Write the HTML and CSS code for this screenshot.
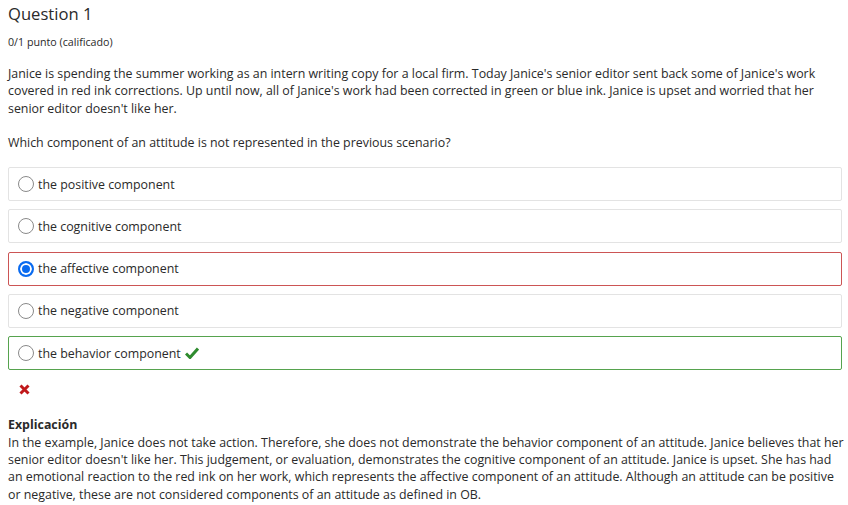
FILE: index.html
```html
<!DOCTYPE html>
<html lang="es">
<head>
  <meta charset="UTF-8" />
  <title>Question 1</title>
  <link rel="stylesheet" href="styles.css">
</head>
<body>
  <div class="question">
    <h2 class="q-title">Question 1</h2>
    <div class="q-points">0/1 punto (calificado)</div>

    <p class="q-text">Janice is spending the summer working as an intern writing copy for a local firm. Today Janice's senior editor sent back some of Janice's work covered in red ink corrections. Up until now, all of Janice's work had been corrected in green or blue ink. Janice is upset and worried that her senior editor doesn't like her.</p>
    <p class="q-prompt">Which component of an attitude is not represented in the previous scenario?</p>

    <div class="answers">
      <label class="answer"><span class="radio"></span>the positive component</label>
      <label class="answer"><span class="radio"></span>the cognitive component</label>
      <label class="answer wrong"><span class="radio checked"></span>the affective component</label>
      <label class="answer"><span class="radio"></span>the negative component</label>
      <label class="answer right"><span class="radio"></span>the behavior component
        <svg class="check" width="14" height="12" viewBox="0 0 14 12"><path d="M1 6.5 L5 10.5 L13 1.5" fill="none" stroke="#2e8b2e" stroke-width="3"/></svg>
      </label>
    </div>

    <div class="result-mark">
      <svg width="11" height="11" viewBox="0 0 11 11"><path d="M1.5 1.5 L9.5 9.5 M9.5 1.5 L1.5 9.5" stroke="#c0191b" stroke-width="3"/></svg>
    </div>

    <div class="explanation">
      <strong>Explicación</strong>
      <p>In the example, Janice does not take action. Therefore, she does not demonstrate the behavior component of an attitude. Janice believes that her senior editor doesn't like her. This judgement, or evaluation, demonstrates the cognitive component of an attitude. Janice is upset. She has had an emotional reaction to the red ink on her work, which represents the affective component of an attitude. Although an attitude can be positive or negative, these are not considered components of an attitude as defined in OB.</p>
    </div>
  </div>
</body>
</html>
```

FILE: styles.css
```css
body {
  margin: 0;
  padding: 0 2px 0 8px;
  font-family: 'Open Sans', sans-serif;
  font-size: 12.4px;
  line-height: 17.3px;
  color: #2a2a2a;
  background: #fff;
}
.q-title {
  margin: 0;
  padding-top: 1px;
  font-size: 16.6px;
  line-height: 26px;
  font-weight: 400;
}
.q-points {
  margin-top: 7px;
  font-size: 10.7px;
  line-height: 16px;
}
.q-text {
  margin: 15px 0 0;
}
.q-prompt {
  margin: 17px 0 0;
}
.answers {
  margin-top: 16px;
  width: 834px;
  display: flex;
  flex-direction: column;
  gap: 8.3px;
}
.answer {
  display: flex;
  align-items: center;
  height: 32px;
  padding: 0 9px;
  border: 1px solid #e3e3e3;
  border-radius: 2px;
}
.answer.wrong {
  border-color: #cc5555;
}
.answer.right {
  border-color: #56a34e;
}
.radio {
  box-sizing: border-box;
  width: 16px;
  height: 16px;
  margin-right: 4px;
  border: 1px solid #8a8a8a;
  border-radius: 50%;
  background: #fff;
}
.radio.checked {
  border: 2px solid #0a6bf0;
  box-shadow: inset 0 0 0 2px #fff;
  background: #0a6bf0;
}
.check {
  margin-left: 4px;
}
.result-mark {
  margin: 12px 0 0 11px;
  height: 11px;
}
.explanation {
  margin-top: 23px;
}
.explanation strong {
  display: block;
}
.explanation p {
  margin: 0;
}
```
